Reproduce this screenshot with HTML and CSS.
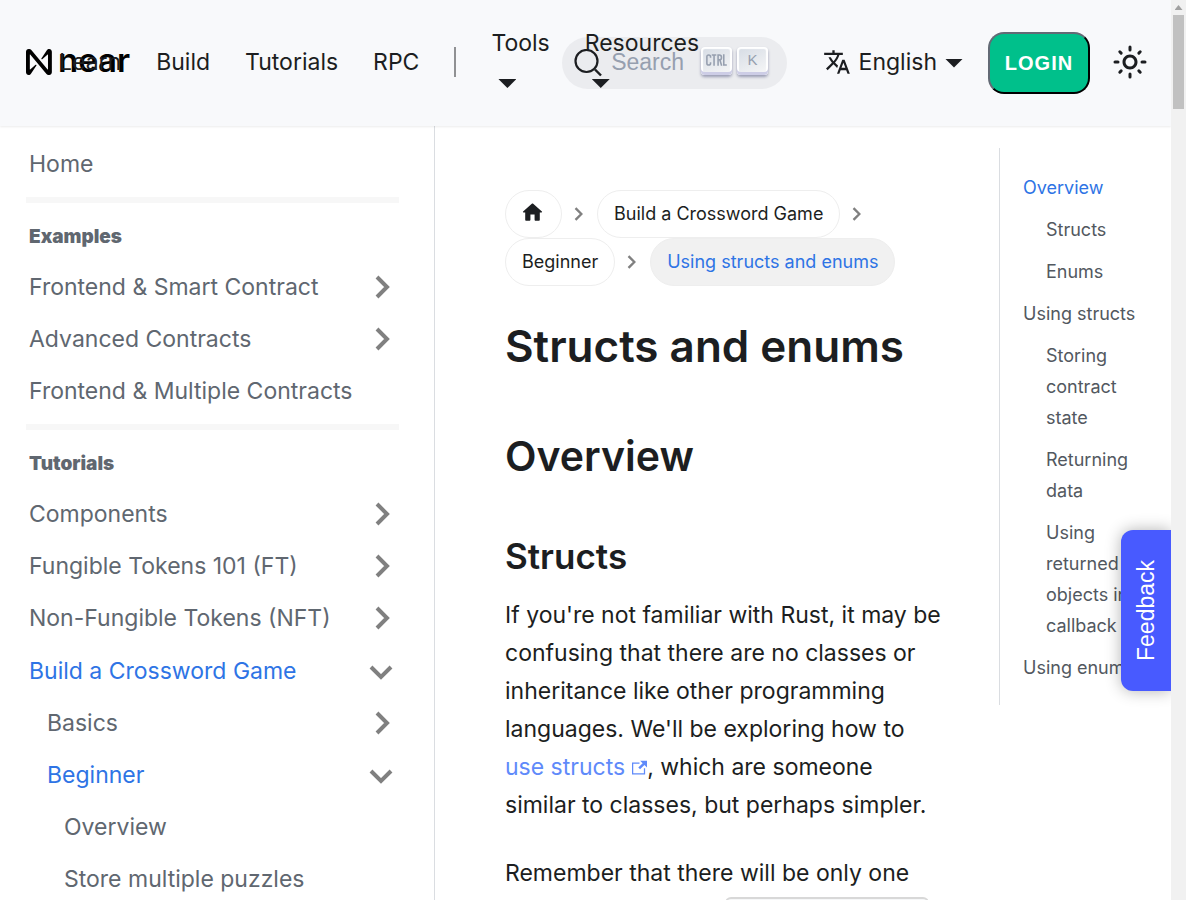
FILE: index.html
```html
<!DOCTYPE html>
<html lang="en">
<head>
<meta charset="utf-8">
<title>Structs and enums</title>
<link rel="stylesheet" href="styles.css">
</head>
<body>
<div class="page">
  <header class="navbar">
    <a class="brand" href="#" aria-label="near">
      <svg class="brand-mark" viewBox="0 0 90 90" aria-hidden="true"><path d="M72.2 4.6L53.3 32.7c-1.3 1.9 1.2 4.2 3 2.6L74.900 19.200c.5-.4 1.200-.1 1.200.6v50.500c0 .7-.9 1-1.300.5l-56.300-67.300C16.700 1.200 14.100 0 11.200 0h-2C4.100 0 0 4.100 0 9.300v71.400C0 85.900 4.100 90 9.300 90c3.200 0 6.200-1.700 7.900-4.400l18.900-28.100c1.300-1.900-1.200-4.200-3-2.600L14.500 71c-.5.4-1.200.1-1.200-.6V19.700c0-.7.9-1 1.300-.5l56.300 67.400c1.800 2.200 4.500 3.400 7.300 3.400h2c5.100 0 9.300-4.200 9.300-9.300V9.300c0-5.200-4.200-9.300-9.300-9.300-3.200 0-6.200 1.700-8 4.600z"/></svg>
      <span class="brand-name">near</span>
    </a>
    <nav class="menu">
      <a class="menu-link" href="#">Learn</a>
      <a class="menu-link" href="#">Build</a>
      <a class="menu-link" href="#">Tutorials</a>
      <a class="menu-link" href="#">RPC</a>
      <span class="divider"></span>
      <a class="menu-link stacked" href="#">Tools<span class="caret"></span></a>
      <a class="menu-link stacked" href="#">Resources<span class="caret"></span></a>
    </nav>
    <button class="search" type="button" aria-label="Search">
      <svg class="search-icon" viewBox="0 0 28 28" aria-hidden="true"><circle cx="12.500" cy="12" r="11" fill="none" stroke="#1c1e21" stroke-width="2.2"/><path d="m21 20.500 6 6" stroke="#1c1e21" stroke-width="2.4"/></svg>
      <span class="search-text">Search</span>
      <kbd class="key"><svg viewBox="0 0 24 16" class="ctrl-icon" aria-label="Ctrl"><g fill="none" stroke="#969faf" stroke-width="1.8"><path d="M5.2 5.5V4.4Q5.2 2.2 3.1 2.2T1 4.4v7.2q0 2.2 2.1 2.2t2.1-2.2v-1.1M6.6 2.2h5.2M9.2 2.2V14.600M13.800 14.600V2.200h1.500q2.400 0 2.400 2.800t-2.400 2.800h-1.500M15.900 8l2 6.600M20.300 1.500v12.200h3.500"/></g></svg></kbd>
      <kbd class="key">K</kbd>
    </button>
    <a class="language" href="#">
      <svg class="language-icon" viewBox="0 0 24 24" aria-hidden="true"><path fill="currentColor" d="M12.87 15.07l-2.54-2.51.03-.03c1.740-1.940 2.980-4.170 3.710-6.530H17V4h-7V2H8v2H1v1.990h11.170C11.500 7.920 10.440 9.750 9 11.350 8.070 10.320 7.300 9.190 6.690 8h-2c.730 1.630 1.730 3.170 2.980 4.560l-5.090 5.020L4 19l5-5 3.110 3.110.760-2.040zM18.500 10h-2L12 22h2l1.120-3h4.750L21 22h2l-4.500-12zm-2.620 7l1.620-4.330L19.120 17h-3.240z"/></svg>
      <span>English</span><span class="caret"></span>
    </a>
    <button class="login" type="button">LOGIN</button>
    <button class="theme" type="button" aria-label="Switch theme">
      <svg viewBox="0 0 24 24" aria-hidden="true"><path fill="currentColor" d="M12,9c1.650,0,3,1.350,3,3s-1.350,3-3,3s-3-1.350-3-3S10.350,9,12,9 M12,7c-2.760,0-5,2.240-5,5s2.240,5,5,5s5-2.240,5-5 S14.760,7,12,7L12,7z"/><path d="M2 12h2M20 12h2M12 2v2M12 20v2M5.200 5.200l.9.900M17.900 17.900l.9.900M5.200 18.800l.9-.9M17.900 6.100l.9-.9" stroke="currentColor" stroke-width="2" stroke-linecap="round"/></svg>
    </button>
  </header>
  <div class="body">
    <aside class="sidebar">
      <a class="side-link" href="#">Home</a>
      <hr class="rule">
      <h4 class="side-title">Examples</h4>
      <a class="side-link" href="#">Frontend &amp; Smart Contract<svg class="chevron" viewBox="0 0 24 24"><path d="m8 2 10 10-10 10"/></svg></a>
      <a class="side-link" href="#">Advanced Contracts<svg class="chevron" viewBox="0 0 24 24"><path d="m8 2 10 10-10 10"/></svg></a>
      <a class="side-link" href="#">Frontend &amp; Multiple Contracts</a>
      <hr class="rule">
      <h4 class="side-title">Tutorials</h4>
      <a class="side-link" href="#">Components<svg class="chevron" viewBox="0 0 24 24"><path d="m8 2 10 10-10 10"/></svg></a>
      <a class="side-link" href="#">Fungible Tokens 101 (FT)<svg class="chevron" viewBox="0 0 24 24"><path d="m8 2 10 10-10 10"/></svg></a>
      <a class="side-link" href="#">Non-Fungible Tokens (NFT)<svg class="chevron" viewBox="0 0 24 24"><path d="m8 2 10 10-10 10"/></svg></a>
      <div class="side-group">
        <a class="side-link active" href="#">Build a Crossword Game<svg class="chevron" viewBox="0 0 24 24"><path d="m2 8 10 10L22 8"/></svg></a>
        <a class="side-link level-2" href="#">Basics<svg class="chevron" viewBox="0 0 24 24"><path d="m8 2 10 10-10 10"/></svg></a>
        <a class="side-link level-2 active" href="#">Beginner<svg class="chevron" viewBox="0 0 24 24"><path d="m2 8 10 10L22 8"/></svg></a>
        <a class="side-link level-3" href="#">Overview</a>
        <a class="side-link level-3" href="#">Store multiple puzzles</a>
      </div>
    </aside>
    <main class="content">
      <nav class="crumbs" aria-label="Breadcrumbs">
        <a class="crumb crumb-home" href="#" aria-label="Home"><svg viewBox="0 0 24 24"><path d="M10 19v-5h4v5c0 .550.450 1 1 1h3c.550 0 1-.450 1-1v-7h1.700c.460 0 .680-.570.330-.870L12.670 3.600c-.380-.340-.960-.340-1.340 0l-8.360 7.530c-.340.300-.130.870.330.870H5v7c0 .550.450 1 1 1h3c.550 0 1-.450 1-1z" fill="currentColor"/></svg></a>
        <svg class="sep" viewBox="0 0 12 12"><path d="m3 1 5 5-5 5"/></svg>
        <a class="crumb" href="#">Build a Crossword Game</a>
        <svg class="sep" viewBox="0 0 12 12"><path d="m3 1 5 5-5 5"/></svg>
        <a class="crumb" href="#">Beginner</a>
        <svg class="sep" viewBox="0 0 12 12"><path d="m3 1 5 5-5 5"/></svg>
        <span class="crumb current">Using structs and enums</span>
      </nav>
      <h1>Structs and enums</h1>
      <h2>Overview</h2>
      <h3>Structs</h3>
      <p>If you're not familiar with Rust, it may be confusing that there are no classes or inheritance like other programming languages. We'll be exploring how to <a class="link" href="#">use structs<svg class="external" viewBox="0 0 24 24"><path fill="currentColor" d="M21 13v10h-21v-19h12v2h-10v15h17v-8h2zm3-12h-10.988l4.035 4-6.977 7.070 2.828 2.828 6.977-7.070 4.125 4.172v-11z"/></svg></a>, which are someone similar to classes, but perhaps simpler.</p>
      <p>Remember that there will be only one struct that gets the <code>#[near_bindgen]</code></p>
    </main>
    <nav class="toc" aria-label="On this page">
      <ul>
        <li><a class="active" href="#">Overview</a></li>
        <li class="nested"><a href="#">Structs</a></li>
        <li class="nested"><a href="#">Enums</a></li>
        <li><a href="#">Using structs</a></li>
        <li class="nested"><a href="#">Storing contract state</a></li>
        <li class="nested"><a href="#">Returning data</a></li>
        <li class="nested"><a href="#">Using returned objects in callback</a></li>
        <li><a href="#">Using enums</a></li>
      </ul>
    </nav>
  </div>
  <button class="feedback" type="button">Feedback</button>
</div>
<div class="scrollbar" aria-hidden="true"><span class="scroll-arrow"></span><span class="scroll-thumb"></span></div>
</body>
</html>
```
FILE: styles.css
```css
* { box-sizing: border-box; }
body {
  margin: 0;
  height: 100vh;
  overflow: hidden;
  display: grid;
  grid-template-columns: minmax(0, 1fr) 15px;
  font: 23px/38px Inter, "Liberation Sans", sans-serif;
  color: #1c1e21;
  background: #fff;
}
a { color: inherit; text-decoration: none; }
button { font: inherit; color: inherit; border: 0; background: none; padding: 0; }
.page { position: relative; height: 100vh; overflow: hidden; }

.navbar {
  display: flex;
  align-items: center;
  height: 126px;
  padding: 0 23px 0 59px;
  background: #f8f9fb;
  box-shadow: 0 1px 2px rgba(0, 0, 0, .08);
  position: relative;
  z-index: 1;
}
.brand { position: absolute; left: 26px; top: 42px; display: flex; align-items: center; gap: 6px; color: #000; height: 40px; }
.brand-mark { width: 26px; height: 26px; }
.brand-name { font-size: 33px; font-weight: 600; line-height: 34px; margin-top: -4px; }
.menu { display: flex; align-items: center; gap: 35px; padding-bottom: 2px; }
.menu-link { position: relative; z-index: 1; }
.divider { width: 2px; height: 30px; background: #909193; }
.stacked { display: flex; flex-direction: column; height: 76px; }
.caret { flex: none; width: 18px; height: 9px; background: #1c1e21; clip-path: polygon(0 0, 100% 0, 50% 100%); }
.stacked .caret { margin: 17px 0 0 7px; }
.search { display: flex; align-items: center; width: 225px; height: 52px; flex: none; margin-left: -137px; padding: 0 19px 0 12px; border-radius: 26px; background: #ebecef; }
.search-icon { width: 28px; height: 28px; margin-right: 9px; flex: none; }
.search-text { font: 23px/38px "Liberation Sans", sans-serif; color: #969faf; margin-right: auto; padding-bottom: 2px; }
.key { width: 31px; height: 28px; display: flex; align-items: center; justify-content: center; margin: 0 0 4px 5px; padding-bottom: 3px; font: 15px/24px "Liberation Sans", sans-serif; color: #969faf; border-radius: 4px; background: linear-gradient(-26deg, #f8f8f8, #d5dbe4); box-shadow: inset 0 -3px #cdcde6, inset 0 0 1px 2px #fff, 0 2px 3px rgba(30, 35, 90, .4); }
.ctrl-icon { width: 23px; height: 14px; }
.language { display: flex; align-items: center; margin-left: auto; padding-bottom: 2px; }
.language-icon { width: 28px; height: 28px; margin-right: 8px; }
.language .caret { margin: 2px 0 0 8px; }
.login { width: 102px; height: 62px; margin-left: 25px; border: 2px outset #1c1e21; border-radius: 16px; background: #00c08b; color: #fff; font: bold 20px/24px "Liberation Sans", sans-serif; letter-spacing: 1px; }
.theme { width: 36px; height: 36px; margin: 0 0 2px 22px; }
.theme svg { display: block; }

.body { display: grid; grid-template-columns: 435px minmax(0, 1fr) 172px; }
.sidebar { border-right: 1px solid #dadde1; padding: 12px 35px 0 26px; min-height: calc(100vh - 126px); color: #606770; }
.side-link { display: flex; align-items: center; justify-content: space-between; height: 52px; padding: 0 6px 0 3px; white-space: nowrap; }
.side-group { padding-top: 1px; }
.level-2 { padding-left: 21px; }
.level-3 { padding-left: 38px; }
.active { color: #2e74e5; }
.chevron { width: 24px; height: 24px; fill: none; stroke: #808080; stroke-width: 4; }
.rule { border: 0; height: 6px; margin: 7px 0 12px; background: #f7f7f7; }
.side-title { margin: 0; padding: 4px 3px; font-size: 19px; line-height: 36px; height: 46px; font-weight: 900; }

.content { padding: 64px 50px 0 70px; }
.crumbs { display: flex; flex-wrap: wrap; align-items: center; font-size: 18px; line-height: 30px; }
.crumb { padding: 8px 16px; border: 1px solid #eee; border-radius: 24px; }
.crumb-home { width: 57px; height: 48px; padding: 9px 14px; }
.crumb-home svg { width: 25px; height: 25px; display: block; }
.current { background: #f1f1f1; color: #2e74e5; }
.sep { width: 14px; height: 14px; margin: 0 11px 0 10px; fill: none; stroke: #808080; stroke-width: 2; }
h1, h2, h3 { margin: 0; font-weight: 600; }
h1 { font-size: 44px; line-height: 56px; margin-top: 32px; }
h2 { font-size: 41px; line-height: 52px; margin-top: 56px; }
h3 { font-size: 35px; line-height: 44px; margin-top: 52px; }
p { margin: 18px 0 30px; line-height: 38px; }
.link { color: #5f8afa; }
.external { width: 15px; height: 15px; margin-left: 7px; }
code { display: inline-block; font: 20px/30px "Liberation Mono", monospace; border: 2px solid #d8d8d8; border-radius: 6px; background: #f6f7f8; padding: 0 10px; margin-left: 8px; }

.toc { padding-top: 22px; }
.toc ul { list-style: none; margin: 0; padding: 24px 24px 22px 23px; border-left: 1px solid #dadde1; font-size: 18px; line-height: 31px; color: #525860; display: flex; flex-direction: column; gap: 11px; }
.nested { padding-left: 23px; }
.toc .active { color: #2e74e5; }

.feedback { position: absolute; right: 0; top: 530px; z-index: 2; width: 50px; height: 161px; writing-mode: vertical-rl; transform: rotate(180deg); background: #485aff; color: #fff; font: 23px/50px "Liberation Sans", sans-serif; border-radius: 0 12px 12px 0; box-shadow: 0 0 16px rgba(0, 0, 0, .3); text-align: center; }

.scrollbar { background: #f1f1f1; display: flex; flex-direction: column; align-items: center; padding-top: 5px; gap: 5px; }
.scroll-arrow { width: 8px; height: 5px; background: #a0a0a0; clip-path: polygon(50% 0, 100% 100%, 0 100%); }
.scroll-thumb { width: 11px; height: 94px; background: #c1c1c1; }
```
